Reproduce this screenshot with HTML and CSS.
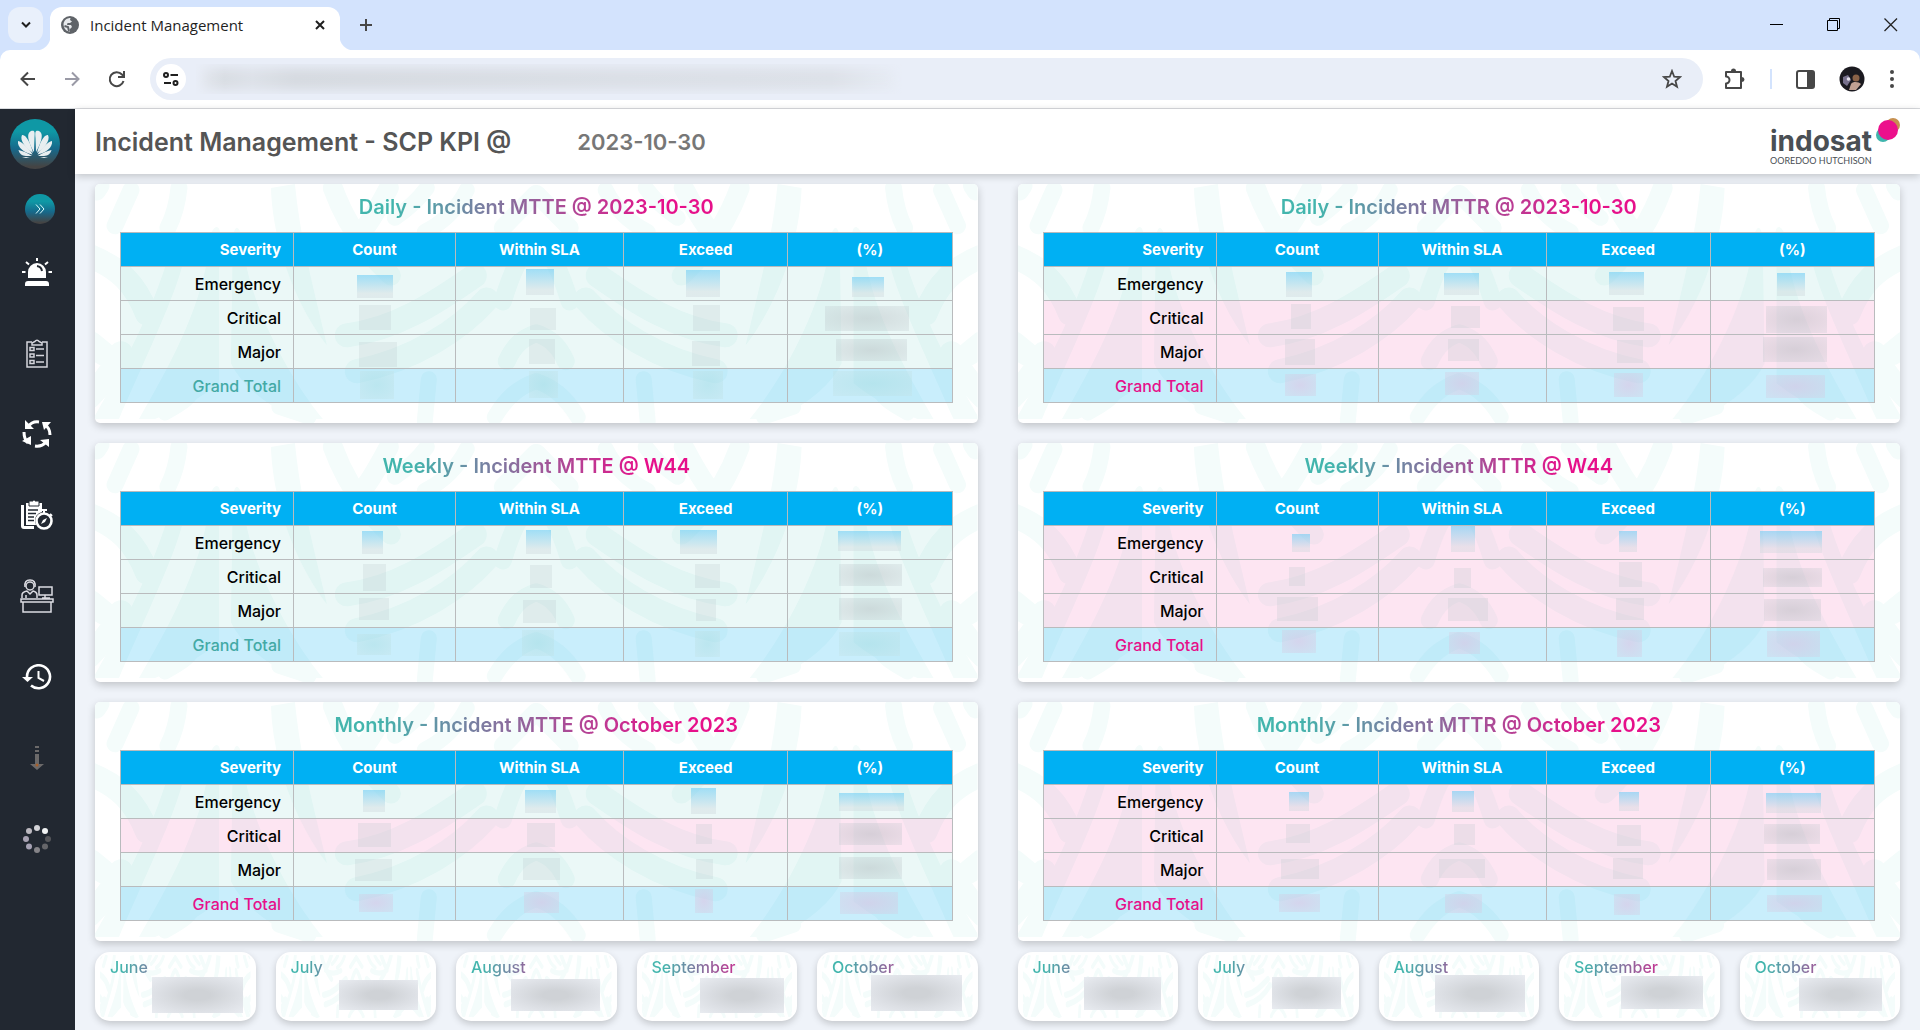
FILE: index.html
```html
<!DOCTYPE html>
<html lang="en">
<head>
    <meta charset="UTF-8">
    <meta name="viewport" content="width=device-width, initial-scale=1.0">
    <title>Incident Management</title>
    <link rel="stylesheet" href="styles.css">
</head>
<body>

    <!-- shared drawings -->
    <svg class="defs" width="0" height="0" aria-hidden="true">
        <defs>
            <g id="leafHalf" fill="none" stroke="#f4fcfb" stroke-linecap="round" stroke-linejoin="round">
                <path stroke-width="17" d="M36 6 20 42M84 4C82 24 76 38 73 44M6 2 2 8"/>
                <path stroke-width="24" d="M-6 72C24 84 40 100 52 130M-4 160 8 170M-6 214C12 196 20 184 26 170"/>
                <path fill="#f4fcfb" stroke="none" d="M78 56C84 44 94 48 92 60C86 100 66 140 24 236L-2 236C30 180 62 120 78 56Z"/>
                <path fill="#f4fcfb" stroke="none" d="M116 50C122 36 128 46 124 60L124 200Q100 220 60 236L44 236C76 180 110 120 116 50Z"/>
                <path fill="#f4fcfb" stroke="none" d="M138 52Q142 34 148 56C150 110 190 190 228 236L200 236Q150 210 136 180Z"/>
                <path fill="#f4fcfb" stroke="none" d="M176 4L200 0C206 60 220 110 232 162C200 120 178 60 176 4Z"/>
                <path stroke-width="15" d="M70 230C84 222 92 218 98 208M184 224 214 234"/>
                <path stroke-width="20" d="M238 4C246 26 262 60 296 92M294 4C284 22 278 34 270 44M262 58C290 74 320 72 350 60"/>
                <path stroke-width="24" d="M252 152C300 146 340 120 380 92M262 188C320 176 366 146 392 116"/>
                <path stroke-width="16" d="M332 4C322 18 312 26 300 34M372 6C362 26 346 40 330 48M334 196 330 238M400 234C412 214 424 204 441 198"/>
                <path stroke-width="18" d="M408 44 441 10M408 118C416 92 424 70 441 58M412 178C420 160 430 154 441 150"/>
            </g>
            <symbol id="leaves" viewBox="0 0 883 240" preserveAspectRatio="none">
                <use href="#leafHalf"/>
                <use href="#leafHalf" transform="translate(883 0) scale(-1 1)"/>
            </symbol>
        </defs>
    </svg>

    <!-- Browser bar -->
    <div class="tabstrip">
        <button class="tab-search" aria-label="Search tabs"><svg width="12" height="8" viewBox="0 0 12 8"><path d="M2 1.500 6 5.500 10 1.500" fill="none" stroke="#1f1f1f" stroke-width="2"/></svg></button>
        <div class="tab">
            <svg width="18" height="18" viewBox="0 0 18 18"><circle cx="9" cy="9" r="9" fill="#5f6368"/><path d="M2.500 8C3 4 6 2 9.500 2L9 4 11 5.500 9 7 6.500 7 6 9H10L11 11 9 13V15.500C5 15.500 2.500 12 2.500 8Z" fill="#e8eaed"/><path d="M3.500 10 7 11 8 15" fill="none" stroke="#5f6368" stroke-width="2"/></svg>
            <span class="tab-title">Incident Management</span>
            <button class="tab-close" aria-label="Close tab"><svg width="10" height="10" viewBox="0 0 10 10"><path d="M1 1 9 9M9 1 1 9" stroke="#1f1f1f" stroke-width="2"/></svg></button>
        </div>
        <button class="tab-new" aria-label="New tab"><svg width="14" height="14" viewBox="0 0 14 14"><path d="M7 1V13M1 7H13" stroke="#474747" stroke-width="2"/></svg></button>
        <div class="window-buttons">
            <button aria-label="Minimize"><svg width="14" height="14" viewBox="0 0 14 14"><path d="M0 6.500H13" stroke="#000"/></svg></button>
            <button aria-label="Restore"><svg width="14" height="14" viewBox="0 0 14 14"><path d="M.5 2.500H10.500V12.500H.5ZM2.500 2.500V.5H12.500V10.500H10.500" fill="none" stroke="#000"/></svg></button>
            <button aria-label="Close"><svg width="14" height="14" viewBox="0 0 14 14"><path d="M.5.5 13 13M13 .5.5 13" stroke="#222" stroke-width="1.300"/></svg></button>
        </div>
    </div>
    <div class="toolbar">
        <button aria-label="Back"><svg width="16" height="16" viewBox="0 0 16 16"><path d="M15 8H2M8 1.500 1.500 8 8 14.500" fill="none" stroke="#474747" stroke-width="2"/></svg></button>
        <button aria-label="Forward"><svg width="16" height="16" viewBox="0 0 16 16"><path d="M1 8H14M8 1.500 14.500 8 8 14.500" fill="none" stroke="#9a9aa6" stroke-width="2"/></svg></button>
        <button aria-label="Reload"><svg width="18" height="18" viewBox="0 0 18 18"><path d="M15.500 11A7 7 0 1 1 14 4.500L15.500 6M16 1V7H10" fill="none" stroke="#474747" stroke-width="2"/></svg></button>
        <div class="address">
            <button class="site-info" aria-label="Site information"><svg width="16" height="14" viewBox="0 0 16 14"><g fill="none" stroke="#1f1f1f" stroke-width="2"><circle cx="3" cy="3" r="2"/><circle cx="12.500" cy="11" r="2"/><path d="M7.500 3H15M1 11H8"/></g></svg></button>
            <input class="url" type="text" aria-label="Address">
            <button class="star" aria-label="Bookmark"><svg width="20" height="20" viewBox="0 0 20 20"><path d="M10 2 12.200 7.700 18 8 13.500 12 15 17.800 10 14.500 5 17.800 6.500 12 2 8 7.800 7.700Z" fill="none" stroke="#474747" stroke-width="1.800"/></svg></button>
        </div>
        <div class="tools">
            <button aria-label="Extensions"><svg width="22" height="22" viewBox="0 0 22 22"><path d="M2 4H17V20H2V15.500A3.500 3.500 0 0 0 2 8.500Z" fill="none" stroke="#474747" stroke-width="2" stroke-linejoin="round"/><path d="M7 3A2.500 2.500 0 0 1 12 3ZM18 9A2.500 2.500 0 0 1 18 14Z" fill="#474747"/></svg></button>
            <span class="divider"></span>
            <button aria-label="Side panel"><svg width="19" height="19" viewBox="0 0 19 19"><rect x="1" y="1" width="17" height="17" rx="2" fill="none" stroke="#474747" stroke-width="2"/><path d="M11 1H18V18H11Z" fill="#474747"/></svg></button>
            <button aria-label="Profile"><svg width="26" height="26" viewBox="0 0 26 26"><circle cx="13" cy="13" r="12.500" fill="#1b1a20"/><circle cx="17" cy="12" r="3.500" fill="#8a6248"/><path d="M4 11 9 9 12 14 8 20 4 17Z" fill="#77708c"/><path d="M12 18C14 15 20 16 22 18L17 24H10Z" fill="#c0a092"/><circle cx="9.500" cy="13" r="1.800" fill="#e4e0ea"/></svg></button>
            <button aria-label="Menu"><svg width="6" height="20" viewBox="0 0 6 20"><g fill="#474747"><circle cx="3" cy="3" r="2"/><circle cx="3" cy="10" r="2"/><circle cx="3" cy="17" r="2"/></g></svg></button>
        </div>
    </div>

    <div class="app">
        <!-- Sidebar -->
        <aside class="sidebar">
            <a class="logo" href="#" aria-label="Home">
                <svg width="36" height="28" viewBox="0 0 36 28">
                    <g id="petals" fill="#e8eef0">
                        <path d="M17 22C13 15 8 4 14 1C18 0 18 2 17.500 8Z"/>
                        <path d="M16 23C10 19 2 11 5 5C9 4 14 14 16 23Z"/>
                        <path d="M15.500 24.500C8 23 0 18 1 11C5 12 12 18 15.500 24.500Z"/>
                        <path d="M15 26H9C5 26 2 23 1.500 20C6 21 11 23 15 26ZM5 27H13L9 28Z"/>
                    </g>
                    <use href="#petals" transform="translate(36 0) scale(-1 1)"/>
                </svg>
            </a>
            <button class="expand" aria-label="Expand menu"><svg width="10" height="10" viewBox="0 0 10 10"><path d="M1 .5 5 5 1 9.500M5 .5 9 5 5 9.500" fill="none" stroke="#dff" stroke-width="1"/></svg></button>
            <nav>
                <a href="#" aria-label="Alarms"><svg width="30" height="30" viewBox="0 0 30 30"><path d="M6 21V15A9 9 0 0 1 24 15V21ZM3 29V27Q3 24 6 24H24Q27 24 27 27V29Z" fill="#fff"/><path d="M15 9A6 6 0 0 1 20 14" fill="none" stroke="#222831" stroke-width="2"/><path d="M15 1V4M4 5 7 7.500M26 5 23 7.500M0 15H3.500M26.500 15H30" stroke="#fff" stroke-width="2"/></svg></a>
                <a href="#" aria-label="Checklist"><svg width="22" height="30" viewBox="0 0 22 30"><g fill="none" stroke="#d5d5dc" stroke-width="1.500"><path d="M6 4H1V29H21V4H16"/><path d="M6 7V5L9 3.500A2.200 2.200 0 0 1 13 3.500L16 5V7Z"/><path d="M4 9.500H8V12.500H4ZM4 16H8V19H4ZM4 22.500H8V25.500H4ZM10 11H18M10 17.500H18M10 24H18"/></g></svg></a>
                <a href="#" aria-label="Changes"><svg width="30" height="30" viewBox="0 0 30 30"><g fill="none" stroke="#fff" stroke-width="3"><path d="M17 3Q10 2 6 8M28 16Q28 9 23 6M13 27Q20 28 24 23M2 13Q2 20 6 24"/></g><path d="M3 1V10H12ZM20 3H29L22 11ZM27 20V28L18 21ZM0 22 9 17V26Z" fill="#fff"/></svg></a>
                <a href="#" aria-label="Time reports"><svg width="34" height="30" viewBox="0 0 34 30"><path d="M1 5H4V26H14V29H4Q1 29 1 26ZM7 3H22V12Q15 14 15 21L16 25H6V3Z" fill="#fff"/><path d="M9 1H13V0H15V1H19V6H9Z" fill="#fff" stroke="#222831"/><path d="M8 10H18M8 13.500H16M8 17H14M8 20.500H14" stroke="#222831" stroke-width="1.300"/><circle cx="24" cy="21" r="7.500" fill="#222831" stroke="#fff" stroke-width="2.600"/><path d="M24 13V10M21 10H27M30 14 32 16" stroke="#fff" stroke-width="2"/><path d="M21 24 23 20 27 18 25 22Z" fill="#fff"/></svg></a>
                <a href="#" aria-label="Service desk"><svg width="34" height="34" viewBox="0 0 34 34"><g fill="none" stroke="#dcdce2" stroke-width="1.500"><circle cx="10" cy="7" r="4"/><path d="M5 8Q4 1 10 1Q16 1 15 8M2 19V16Q2 13 7 12L10 15 13 12Q17 13 17 16V19M6 19V16M19 8H32V16H19ZM22 19H30M25 16V19M1 20H33V23H1ZM3 23V33H31V23"/></g></svg></a>
                <a href="#" aria-label="History"><svg width="30" height="26" viewBox="0 0 30 26"><path d="M5 13A11.500 11.500 0 1 1 9 21.500" fill="none" stroke="#fff" stroke-width="2.600"/><path d="M0 13H11L5.500 18Z" fill="#fff"/><path d="M16.500 7V14L22 17" fill="none" stroke="#fff" stroke-width="2"/></svg></a>
                <a href="#" aria-label="Download"><svg width="14" height="26" viewBox="0 0 14 26"><path d="M5 1H9V3H5ZM5 5H9V7H5ZM5 9H9V19H14L7 25 0 19H5Z" fill="#6c6a6a"/><circle cx="7" cy="20" r="1.500" fill="#a8602c"/></svg></a>
                <a href="#" aria-label="Loading"><svg width="28" height="28" viewBox="0 0 28 28"><circle cx="14" cy="3" r="3" fill="#d4d4d8"/><circle cx="22" cy="6" r="3" fill="#f2f4f4"/><circle cx="25" cy="14" r="3" fill="#56575b"/><circle cx="22" cy="21.500" r="3" fill="#66666a"/><circle cx="14" cy="25" r="3" fill="#858488"/><circle cx="6" cy="21.500" r="3" fill="#a6a2b4"/><circle cx="3" cy="14" r="3" fill="#a9a3b3"/><circle cx="6" cy="6" r="3" fill="#bcb9c0"/></svg></a>
            </nav>
        </aside>

        <div class="content">
            <header class="header">
                <h1>Incident Management - SCP KPI @</h1>
                <span class="date">2023-10-30</span>
                <div class="brand">
                    <span class="brand-name">indosat</span>
                    <span class="brand-sub">OOREDOO HUTCHISON</span>
                    <svg class="brand-mark" width="24" height="24" viewBox="0 0 24 24"><circle cx="17" cy="7" r="7" fill="#c69050"/><circle cx="7" cy="17" r="7" fill="#3fb5ad"/><circle cx="12" cy="12" r="10" fill="#ec108c"/></svg>
                </div>
            </header>
            <main class="board" id="board"></main>
        </div>
    </div>

    <script src="script.js"></script>
</body>
</html>
```

FILE: styles.css
```css
* {
box-sizing: border-box;
}

body {
font-family: Inter, "Noto Sans", sans-serif;
background-color: #eff3f9;
color: #000;
display: flex;
flex-direction: column;
min-height: 100vh;
margin: 0;
}

button {
display: flex;
align-items: center;
justify-content: center;
padding: 0;
border: none;
background: none;
cursor: pointer;
}

a {
text-decoration: none;
}

.defs {
position: absolute;
}

/* browser bar */
.tabstrip {
position: relative;
z-index: 1;
background-color: #d3e3fd;
height: 50px;
padding: 7px 22px 0 8px;
display: flex;
}

.tab-search {
width: 35px;
height: 36px;
border-radius: 12px;
background-color: #e9f0fb;
}

.tab {
position: relative;
width: 290px;
margin-left: 7px;
padding: 0 15px 7px 11px;
display: flex;
align-items: center;
background-color: white;
border-radius: 12px 12px 0 0;
height: 43px;
}

/* flared feet of the tab */
.tab::before,
.tab::after {
content: "";
position: absolute;
bottom: 0;
width: 14px;
height: 14px;
}

.tab::before {
left: -14px;
background: radial-gradient(circle at 0 0, transparent 14px, white 15px);
}

.tab::after {
right: -14px;
background: radial-gradient(circle at 100% 0, transparent 14px, white 15px);
}

.tab-title {
flex: 1;
margin-left: 11px;
font-family: "Open Sans", sans-serif;
font-size: 15px;
color: #1f1f1f;
}

.tab-new {
width: 36px;
height: 36px;
margin-left: 8px;
}

.window-buttons {
margin-left: auto;
height: 36px;
display: flex;
align-items: center;
gap: 43px;
}

.toolbar {
height: 59px;
background-color: white;
border-bottom: 1px solid #dadce0;
border-radius: 10px 10px 0 0;
padding: 0 25px 0 20px;
display: flex;
align-items: center;
gap: 28px;
box-shadow: 0 -10px 0 #d3e3fd;
}

.address {
flex: 1;
height: 42px;
margin-left: -4px;
padding: 0 21px 0 6px;
border-radius: 21px;
background-color: #e9eef8;
display: flex;
align-items: center;
}

.site-info {
width: 30px;
height: 30px;
border-radius: 50%;
background-color: white;
}

.url {
width: 706px;
height: 30px;
margin-left: 10px;
border: none;
background: linear-gradient(90deg, #e6eaf1, #d9dde3 4%, #dde1e8 8%, #d6dae0 14%, #dbdfe6 60%, #dde1e8 90%, #e8edf6);
box-shadow: inset 0 0 12px 4px #e9eef8;
}

.star {
margin-left: auto;
}

.tools {
margin-left: -7px;
display: flex;
align-items: center;
gap: 24px;
}

.divider {
width: 2px;
height: 20px;
background-color: #d3e3fd;
}

/* page */
.app {
flex: 1;
display: flex;
}

.sidebar {
width: 75px;
background-color: #222831;
padding-top: 10px;
}

.logo {
width: 50px;
height: 50px;
margin-left: 10px;
border-radius: 50%;
background: linear-gradient(#0f98a5 25%, #17688a 60%, #444 95%);
display: flex;
align-items: center;
justify-content: center;
}

.expand {
width: 30px;
height: 30px;
margin: 25px 0 7px 25px;
border-radius: 50%;
background: linear-gradient(#0f98a5 25%, #17688a 60%, #444 95%);
}

.sidebar nav a {
height: 81px;
padding-right: 2px;
display: flex;
align-items: center;
justify-content: center;
}

.content {
flex: 1;
display: flex;
flex-direction: column;
}

.header {
height: 65px;
padding: 0 20px;
background-color: white;
box-shadow: 0 2px 8px rgba(0, 0, 0, 0.2);
display: flex;
align-items: center;
}

h1,
.date {
margin: 0;
line-height: 32px;
font-weight: 600;
color: #555;
}

h1 {
font-size: 25px;
}

.date {
margin-left: 66px;
font-size: 22px;
color: #777;
}

.brand {
position: relative;
width: 130px;
margin-left: auto;
padding-top: 8px;
}

.brand-name,
.brand-sub {
display: block;
color: #4a4f54;
}

.brand-name {
font-size: 28px;
line-height: 30px;
font-weight: 700;
}

.brand-sub {
font-family: Lato, sans-serif;
font-size: 9px;
line-height: 10px;
}

.brand-mark {
position: absolute;
top: 0;
right: 0;
}

.board {
padding: 10px 20px 8px;
display: grid;
grid-template-columns: 1fr 1fr;
column-gap: 40px;
row-gap: 20px;
}

.card {
position: relative;
height: 239px;
padding: 7px 25px 0;
border-radius: 5px;
background-color: white;
box-shadow: 0 3px 8px rgba(0, 0, 0, 0.2);
text-align: center;
}

.leaves {
position: absolute;
top: 0;
left: 0;
width: 100%;
height: 100%;
border-radius: 5px;
}

.card h2 {
position: relative;
display: inline-block;
margin: 0 0 9px;
font-size: 20px;
line-height: 32px;
font-weight: 600;
color: transparent;
background: linear-gradient(90deg, #43b5ad 10%, #e6108a 85%);
background-clip: text;
-webkit-background-clip: text;
}

table {
position: relative;
width: 100%;
table-layout: fixed;
border-collapse: collapse;
font-size: 16px;
}

th,
td {
position: relative;
height: 34px;
padding: 0;
border: 1px solid #b9bbbd;
font-weight: 500;
}

thead th {
background-color: #00b0f3;
color: white;
font-size: 15px;
font-weight: 700;
}

tr > :first-child {
width: 173px;
padding-right: 12px;
text-align: right;
}

tr > :nth-child(2) {
width: 162px;
}

tr > :nth-child(3) {
width: 168px;
}

.ok {
background-color: rgba(30, 175, 165, 0.09);
}

.bad {
background-color: rgba(236, 0, 125, 0.1);
}

.total {
background-color: rgba(0, 175, 240, 0.21);
}

.total-ok th {
color: #43a9a5;
}

.total-bad th {
color: #e6108a;
}

/* masked values */
.mask {
position: absolute;
background: rgba(190, 200, 205, 0.26);
}

td:last-child .mask {
background: radial-gradient(rgba(175, 180, 185, 0.42), rgba(190, 200, 205, 0.26));
}

.first .mask,
.first td:last-child .mask {
background: linear-gradient(rgba(110, 205, 245, 0.6), rgba(205, 215, 220, 0.4) 80%);
}

.total-bad .mask,
.total-bad td:last-child .mask {
background: radial-gradient(rgba(225, 185, 220, 0.48), rgba(210, 205, 225, 0.34));
}

.total-ok .mask,
.total-ok td:last-child .mask {
background: radial-gradient(rgba(160, 215, 215, 0.34), rgba(195, 225, 228, 0.34));
}

.months {
margin-top: -9px;
display: flex;
gap: 20px;
}

.month {
position: relative;
flex: 1;
height: 69px;
padding: 3px 15px;
border-radius: 15px;
background-color: white;
box-shadow: 0 3px 7px rgba(0, 0, 0, 0.18);
}

.month .leaves {
top: 3px;
left: 5px;
width: calc(100% - 10px);
height: calc(100% - 6px);
}

.month h3 {
position: relative;
width: 110px;
margin: 0;
font-size: 16px;
line-height: 24px;
font-weight: 500;
color: transparent;
background: linear-gradient(90deg, #43b5ad 10%, #e6108a 95%);
background-clip: text;
-webkit-background-clip: text;
}

.month .mask {
background: radial-gradient(#cfd2d6 20%, #dcdfe4 60%, #e9ecf1);
}
```

FILE: script.js
```javascript
// masks are [left, top, width, height] inside the cell
const cards = [
    { title: 'Daily - Incident MTTE @ 2023-10-30', rows: ['ok', 'ok', 'ok', 'ok'], masks: [
        [[63,8,36,23],[70,2,28,26],[62,3,34,27],[64,10,32,20]],
        [[65,4,32,25],[74,7,26,22],[69,4,27,26],[37,5,84,25]],
        [[65,7,38,25],[73,4,26,25],[68,6,28,25],[48,4,71,22]],
        [[66,2,34,28],[73,2,29,27],[69,2,30,28],[45,2,79,25]]] },
    { title: 'Daily - Incident MTTR @ 2023-10-30', rows: ['ok', 'bad', 'bad', 'bad'], masks: [
        [[69,5,26,25],[65,6,35,22],[62,5,35,23],[66,6,28,23]],
        [[74,3,20,25],[72,5,29,22],[66,6,31,24],[55,5,61,27]],
        [[68,4,30,26],[69,4,31,22],[70,5,26,23],[52,2,64,25]],
        [[68,5,31,22],[66,3,34,23],[67,4,29,24],[55,6,59,23]]] },
    { title: 'Weekly - Incident MTTE @ W44', rows: ['ok', 'ok', 'ok', 'ok'], masks: [
        [[68,5,21,23],[70,4,25,24],[56,4,37,24],[50,5,63,20]],
        [[69,4,23,27],[74,5,22,23],[71,4,25,24],[51,4,63,22]],
        [[65,4,30,22],[67,6,33,23],[72,5,20,22],[51,4,63,22]],
        [[63,6,34,21],[66,2,32,26],[71,3,25,26],[51,4,61,24]]] },
    { title: 'Weekly - Incident MTTR @ W44', rows: ['bad', 'bad', 'bad', 'bad'], masks: [
        [[75,8,18,18],[72,0,24,26],[72,5,18,21],[49,5,62,22]],
        [[72,7,16,19],[75,8,17,20],[72,2,23,25],[52,8,59,19]],
        [[60,3,41,24],[69,4,40,23],[69,4,28,22],[53,5,57,22]],
        [[65,2,34,23],[70,4,31,22],[70,2,25,27],[56,3,53,26]]] },
    { title: 'Monthly - Incident MTTE @ October 2023', rows: ['ok', 'bad', 'ok', 'bad'], masks: [
        [[69,5,22,22],[69,5,31,23],[67,3,25,26],[51,8,65,18]],
        [[64,4,33,24],[71,4,28,24],[72,5,16,20],[51,4,63,22]],
        [[61,6,37,22],[67,5,37,22],[72,6,17,20],[51,4,63,22]],
        [[65,7,34,18],[68,5,35,21],[71,2,18,24],[52,5,58,22]]] },
    { title: 'Monthly - Incident MTTR @ October 2023', rows: ['bad', 'bad', 'bad', 'bad'], masks: [
        [[72,7,20,19],[73,6,22,21],[72,7,20,19],[55,8,55,20]],
        [[69,5,24,19],[75,5,21,21],[70,6,24,21],[53,5,56,20]],
        [[64,6,38,20],[60,6,46,19],[66,5,30,21],[56,6,54,21]],
        [[62,7,41,18],[66,7,37,19],[67,7,26,21],[56,8,55,17]]] }
];

const monthNames = ['June', 'July', 'August', 'September', 'October'];
const monthMasks = [
    [[57,25,91,36],[63,28,79,30],[55,27,89,32],[63,26,84,35],[54,23,91,36]],
    [[66,25,77,33],[74,25,69,32],[56,23,90,37],[62,24,82,33],[59,26,83,33]]
];

const severities = ['Emergency', 'Critical', 'Major', 'Grand Total'];
const leaves = '<svg class="leaves" aria-hidden="true"><use href="#leaves"/></svg>';

function mask(m) {
    return `<span class="mask" style="left:${m[0]}px;top:${m[1]}px;width:${m[2]}px;height:${m[3]}px"></span>`;
}

function rowClass(card, i) {
    if (i === 3) return 'total total-' + card.rows[i];
    return card.rows[i] + (i === 0 ? ' first' : '');
}

function cardHtml(card) {
    const rows = severities.map((name, i) =>
        `<tr class="${rowClass(card, i)}"><th scope="row">${name}</th>` +
        card.masks[i].map(m => `<td>${mask(m)}</td>`).join('') + '</tr>').join('');
    return `<section class="card">${leaves}<h2>${card.title}</h2>
        <table>
            <thead><tr><th>Severity</th><th>Count</th><th>Within SLA</th><th>Exceed</th><th>(%)</th></tr></thead>
            <tbody>${rows}</tbody>
        </table></section>`;
}

function monthsHtml(masks) {
    return '<div class="months">' + monthNames.map((name, i) =>
        `<section class="month">${leaves}<h3>${name}</h3>${mask(masks[i])}</section>`).join('') + '</div>';
}

document.getElementById('board').innerHTML =
    cards.map(cardHtml).join('') + monthMasks.map(monthsHtml).join('');
```
